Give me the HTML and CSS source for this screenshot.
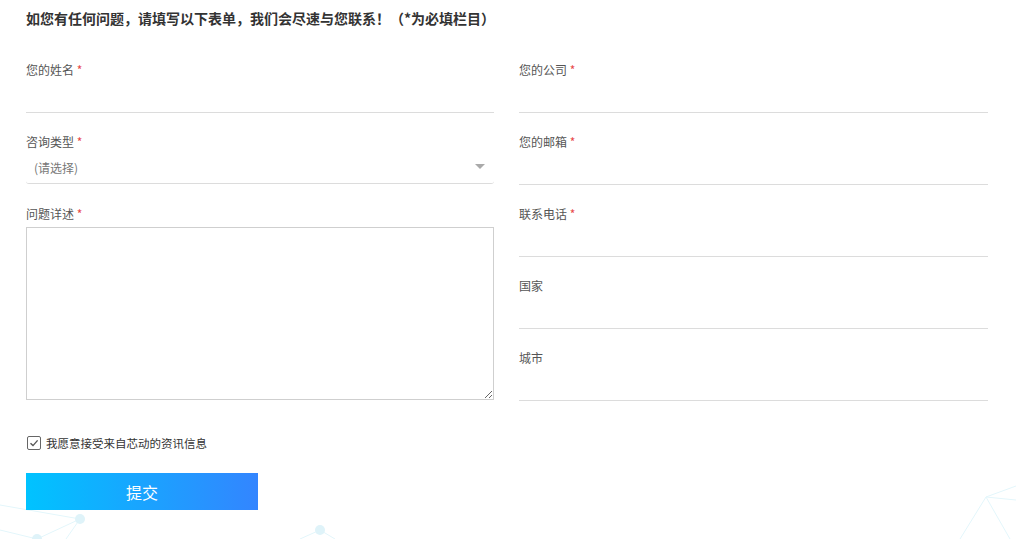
FILE: index.html
```html
<!DOCTYPE html>
<html lang="zh-CN">
<head>
    <meta charset="UTF-8">
    <title>联系我们</title>
    <link rel="stylesheet" href="styles.css">
</head>
<body>
    <svg class="bg-deco" width="1016" height="539" viewBox="0 0 1016 539">
        <g stroke="#e3f6fb" stroke-width="1" fill="none">
            <line x1="0" y1="505" x2="80" y2="519"/>
            <line x1="80" y1="519" x2="37" y2="539"/>
            <line x1="80" y1="519" x2="66" y2="539"/>
            <line x1="0" y1="530" x2="37" y2="539"/>
            <line x1="320" y1="530" x2="300" y2="539"/>
            <line x1="320" y1="530" x2="335" y2="539"/>
            <line x1="986" y1="497" x2="1016" y2="486"/>
            <line x1="986" y1="497" x2="1016" y2="500"/>
            <line x1="986" y1="497" x2="960" y2="539"/>
            <line x1="986" y1="497" x2="1010" y2="539"/>
        </g>
        <g fill="#dff3f9">
            <circle cx="80" cy="519" r="5"/>
            <circle cx="37" cy="539" r="5"/>
            <circle cx="320" cy="530" r="5"/>
        </g>
    </svg>

    <div class="page">
        <h2 class="title">如您有任何问题，请填写以下表单，我们会尽速与您联系！（*为必填栏目）</h2>

        <form class="contact-form">
            <div class="cols">
                <div class="col">
                    <div class="field">
                        <label>您的姓名 <span class="req">*</span></label>
                        <input type="text" class="line-input">
                    </div>
                    <div class="field">
                        <label>咨询类型 <span class="req">*</span></label>
                        <div class="select-box">
                            <span class="placeholder">(请选择)</span>
                            <span class="arrow"></span>
                        </div>
                    </div>
                    <div class="field field-area">
                        <label>问题详述 <span class="req">*</span></label>
                        <textarea class="area"></textarea>
                    </div>
                </div>
                <div class="col">
                    <div class="field">
                        <label>您的公司 <span class="req">*</span></label>
                        <input type="text" class="line-input">
                    </div>
                    <div class="field">
                        <label>您的邮箱 <span class="req">*</span></label>
                        <input type="text" class="line-input">
                    </div>
                    <div class="field">
                        <label>联系电话 <span class="req">*</span></label>
                        <input type="text" class="line-input">
                    </div>
                    <div class="field">
                        <label>国家</label>
                        <input type="text" class="line-input">
                    </div>
                    <div class="field">
                        <label>城市</label>
                        <input type="text" class="line-input">
                    </div>
                </div>
            </div>

            <div class="agree">
                <span class="check">
                    <svg width="10" height="10" viewBox="0 0 10 10"><path d="M1.5 5.2 L4 7.6 L8.6 2.4" stroke="#555" stroke-width="1.4" fill="none"/></svg>
                </span>
                <span>我愿意接受来自芯动的资讯信息</span>
            </div>

            <button type="button" class="submit">提交</button>
        </form>
    </div>
</body>
</html>
```

FILE: styles.css
```css
body {
    margin: 0;
    background: #fff;
    font-family: "Noto Sans CJK SC", "Noto Sans", sans-serif;
    color: #333;
    position: relative;
    height: 539px;
    overflow: hidden;
}

.bg-deco {
    position: absolute;
    left: 0;
    top: 0;
    z-index: 0;
}

.page {
    position: relative;
    z-index: 1;
    width: 962px;
    padding: 8px 26px 0;
}

.title {
    margin: 0;
    font-size: 14px;
    line-height: 20px;
    font-weight: bold;
    color: #333;
}

.contact-form { margin-top: 34px; }

.cols {
    display: grid;
    grid-template-columns: 468px 469px;
    column-gap: 25px;
}

.field { margin-bottom: 21px; }
.field:last-child { margin-bottom: 0; }

.field label {
    display: block;
    font-size: 12px;
    line-height: 16px;
    color: #555;
}

.req { color: #e84a4a; }

.line-input {
    display: block;
    width: 100%;
    height: 35px;
    box-sizing: border-box;
    border: none;
    border-bottom: 1px solid #dcdcdc;
    outline: none;
    background: transparent;
    padding: 0 8px;
    font-size: 12px;
}

.select-box {
    height: 33px;
    border-bottom: 1px solid #dcdcdc;
    border-radius: 0 0 3px 3px;
    display: flex;
    align-items: center;
    justify-content: space-between;
    padding: 0 8px;
}

.placeholder {
    font-size: 12px;
    color: #777;
    margin-top: 1px;
}

.arrow {
    width: 0;
    height: 0;
    border-left: 5px solid transparent;
    border-right: 5px solid transparent;
    border-top: 5px solid #aaa;
    margin-right: 1px;
}

.field-area { padding-top: 1px; }
.field-area label { margin-bottom: 5px; }

.area {
    display: block;
    width: 100%;
    height: 173px;
    box-sizing: border-box;
    border: 1px solid #cfcfcf;
    margin: 0;
    resize: vertical;
    outline: none;
    font-family: inherit;
}

.agree {
    display: flex;
    align-items: center;
    gap: 5px;
    margin-top: 35px;
    margin-left: 1px;
    font-size: 11.5px;
    line-height: 14px;
    color: #333;
}

.check {
    width: 12px;
    height: 12px;
    border: 1.5px solid #666;
    border-radius: 2px;
    display: flex;
    align-items: center;
    justify-content: center;
}

.submit {
    display: block;
    margin-top: 23px;
    width: 232px;
    height: 37px;
    border: none;
    background: linear-gradient(to right, #00c3ff, #3385ff);
    color: #fff;
    font-family: inherit;
    font-size: 16px;
    cursor: pointer;
}
```
